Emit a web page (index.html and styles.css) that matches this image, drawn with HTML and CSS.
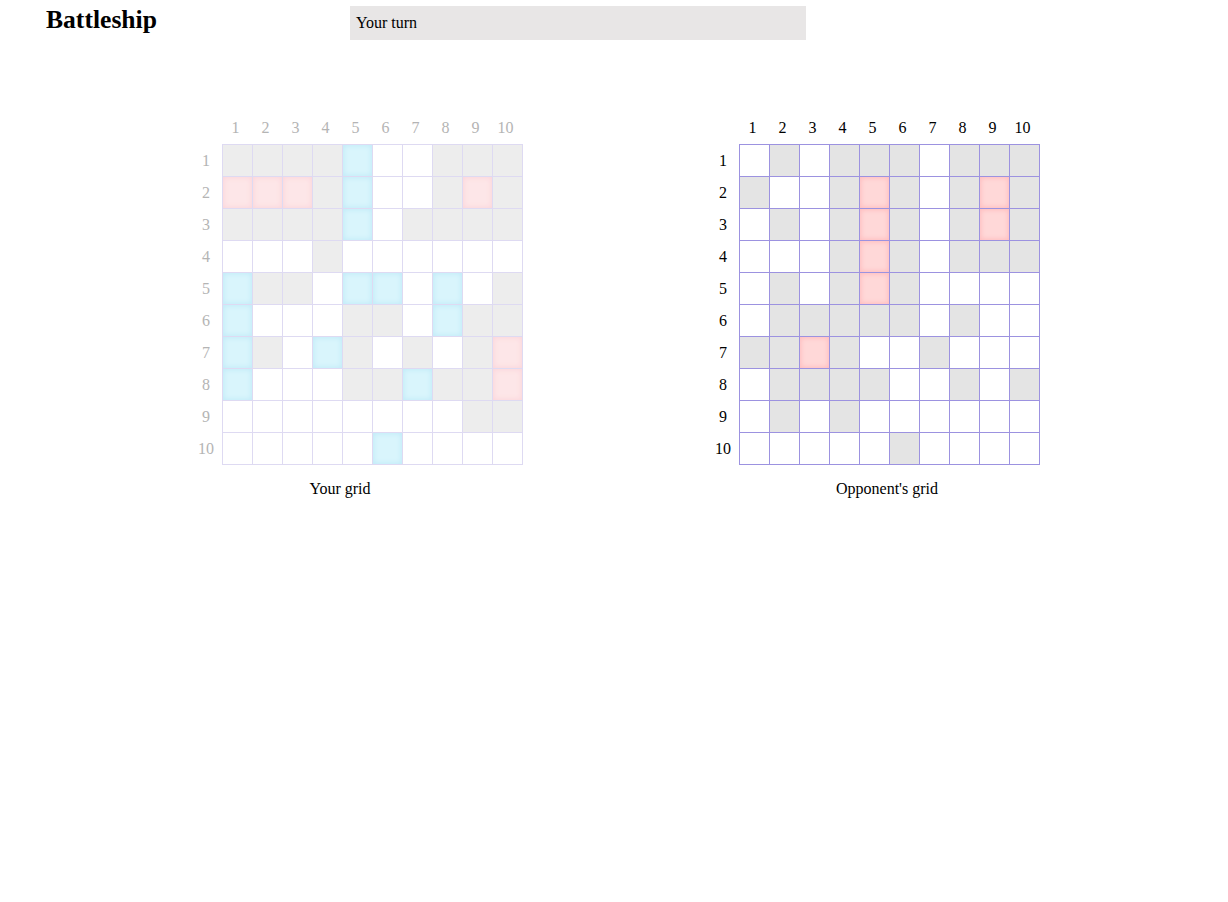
FILE: index.html
```html
<!DOCTYPE html>
<html lang="en">
<head>
<meta charset="utf-8">
<title>Battleship</title>
<link rel="stylesheet" href="styles.css">
</head>
<body>
<header class="topbar">
  <h1 class="title">Battleship</h1>
  <div class="status">Your turn</div>
</header>
<main class="boards">
  <figure class="board-wrap">
    <table class="board board-mine">
      <thead><tr><th></th><th>1</th><th>2</th><th>3</th><th>4</th><th>5</th><th>6</th><th>7</th><th>8</th><th>9</th><th>10</th></tr></thead>
      <tbody>
        <tr><th>1</th><td class="m"></td><td class="m"></td><td class="m"></td><td class="m"></td><td class="s"></td><td></td><td></td><td class="m"></td><td class="m"></td><td class="m"></td></tr>
        <tr><th>2</th><td class="h"></td><td class="h"></td><td class="h"></td><td class="m"></td><td class="s"></td><td></td><td></td><td class="m"></td><td class="h"></td><td class="m"></td></tr>
        <tr><th>3</th><td class="m"></td><td class="m"></td><td class="m"></td><td class="m"></td><td class="s"></td><td></td><td class="m"></td><td class="m"></td><td class="m"></td><td class="m"></td></tr>
        <tr><th>4</th><td></td><td></td><td></td><td class="m"></td><td></td><td></td><td></td><td></td><td></td><td></td></tr>
        <tr><th>5</th><td class="s"></td><td class="m"></td><td class="m"></td><td></td><td class="s"></td><td class="s"></td><td></td><td class="s"></td><td></td><td class="m"></td></tr>
        <tr><th>6</th><td class="s"></td><td></td><td></td><td></td><td class="m"></td><td class="m"></td><td></td><td class="s"></td><td class="m"></td><td class="m"></td></tr>
        <tr><th>7</th><td class="s"></td><td class="m"></td><td></td><td class="s"></td><td class="m"></td><td></td><td class="m"></td><td></td><td class="m"></td><td class="h"></td></tr>
        <tr><th>8</th><td class="s"></td><td></td><td></td><td></td><td class="m"></td><td class="m"></td><td class="s"></td><td class="m"></td><td class="m"></td><td class="h"></td></tr>
        <tr><th>9</th><td></td><td></td><td></td><td></td><td></td><td></td><td></td><td></td><td class="m"></td><td class="m"></td></tr>
        <tr><th>10</th><td></td><td></td><td></td><td></td><td></td><td class="s"></td><td></td><td></td><td></td><td></td></tr>
      </tbody>
    </table>
    <figcaption class="caption caption-mine">Your grid</figcaption>
  </figure>
  <figure class="board-wrap">
    <table class="board board-enemy">
      <thead><tr><th></th><th>1</th><th>2</th><th>3</th><th>4</th><th>5</th><th>6</th><th>7</th><th>8</th><th>9</th><th>10</th></tr></thead>
      <tbody>
        <tr><th>1</th><td></td><td class="m"></td><td></td><td class="m"></td><td class="m"></td><td class="m"></td><td></td><td class="m"></td><td class="m"></td><td class="m"></td></tr>
        <tr><th>2</th><td class="m"></td><td></td><td></td><td class="m"></td><td class="h"></td><td class="m"></td><td></td><td class="m"></td><td class="h"></td><td class="m"></td></tr>
        <tr><th>3</th><td></td><td class="m"></td><td></td><td class="m"></td><td class="h"></td><td class="m"></td><td></td><td class="m"></td><td class="h"></td><td class="m"></td></tr>
        <tr><th>4</th><td></td><td></td><td></td><td class="m"></td><td class="h"></td><td class="m"></td><td></td><td class="m"></td><td class="m"></td><td class="m"></td></tr>
        <tr><th>5</th><td></td><td class="m"></td><td></td><td class="m"></td><td class="h"></td><td class="m"></td><td></td><td></td><td></td><td></td></tr>
        <tr><th>6</th><td></td><td class="m"></td><td class="m"></td><td class="m"></td><td class="m"></td><td class="m"></td><td></td><td class="m"></td><td></td><td></td></tr>
        <tr><th>7</th><td class="m"></td><td class="m"></td><td class="h"></td><td class="m"></td><td></td><td></td><td class="m"></td><td></td><td></td><td></td></tr>
        <tr><th>8</th><td></td><td class="m"></td><td class="m"></td><td class="m"></td><td class="m"></td><td></td><td></td><td class="m"></td><td></td><td class="m"></td></tr>
        <tr><th>9</th><td></td><td class="m"></td><td></td><td class="m"></td><td></td><td></td><td></td><td></td><td></td><td></td></tr>
        <tr><th>10</th><td></td><td></td><td></td><td></td><td></td><td class="m"></td><td></td><td></td><td></td><td></td></tr>
      </tbody>
    </table>
    <figcaption class="caption caption-enemy">Opponent's grid</figcaption>
  </figure>
</main>
</body>
</html>
```

FILE: styles.css
```css
html, body {
  margin: 0;
  padding: 0;
  background: #ffffff;
}

body {
  font-family: "Liberation Serif", "Times New Roman", serif;
  font-size: 16px;
  color: #000000;
}

.topbar {
  display: flex;
  align-items: flex-start;
  padding-top: 6px;
}

.title {
  margin: 0 0 0 46px;
  width: 304px;
  font-size: 25.6px;
  line-height: 28px;
  font-weight: bold;
}

.status {
  width: 444px;
  height: 34px;
  padding: 0 6px;
  line-height: 34px;
  background: #e8e6e6;
}

.boards {
  display: flex;
  align-items: flex-start;
  gap: 184px;
  margin-top: 72px;
  padding-left: 190px;
}

.board-wrap {
  margin: 0;
  display: flex;
  flex-direction: column;
}

.board {
  border-collapse: collapse;
}

.board th {
  padding: 0;
  font-weight: normal;
  font-size: 16px;
  height: 32px;
  text-align: center;
  vertical-align: middle;
}

.board thead th {
  padding-right: 4px;
}

.board tbody th {
  width: 32px;
}

.board td {
  width: 29px;
  height: 31px;
  padding: 0;
  background: #ffffff;
}

/* your grid: faded */
.board-mine th {
  color: #b4b4b4;
}

.board-mine td {
  border: 1px solid #dedaf2;
}

.board-mine td.m {
  background: #ededed;
}

.board-mine td.s {
  background: #d9f5fc;
  box-shadow: inset 0 0 5px 1px #c2ebf8;
}

.board-mine td.h {
  background: #fde6e8;
  box-shadow: inset 0 0 5px 1px #fbd6db;
}

/* opponent grid */
.board-enemy td {
  border: 1px solid #9c92e0;
}

.board-enemy td.m {
  background: #e4e4e4;
}

.board-enemy td.h {
  background: #ffd8d8;
  box-shadow: inset 0 0 5px 1px #ffbcbe;
}

.caption {
  margin-top: 15px;
  text-align: center;
  line-height: 18px;
}

.caption-mine {
  padding-right: 33px;
}

.caption-enemy {
  padding-left: 27px;
}
```
